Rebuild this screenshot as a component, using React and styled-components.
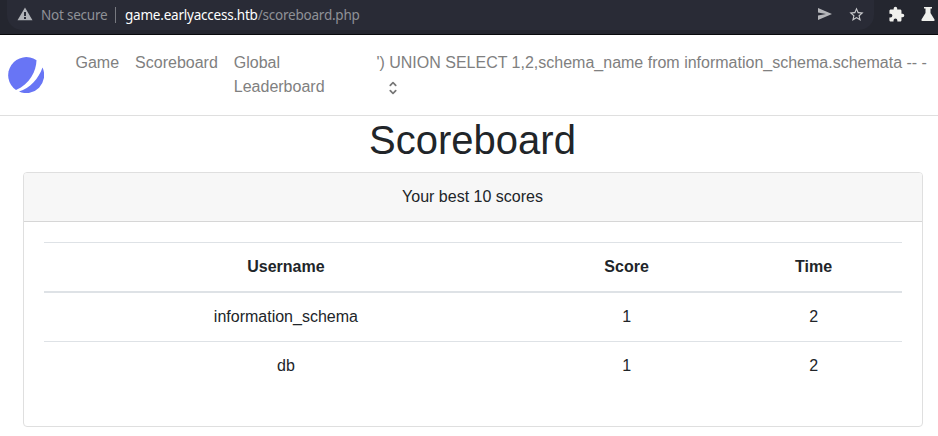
import React from 'react';
import styled, { createGlobalStyle } from 'styled-components';

const GlobalStyle = createGlobalStyle`
  *, *::before, *::after { box-sizing: border-box; }
  body {
    margin: 0;
    overflow: hidden;
    background: #fff;
    color: #212529;
    font: 16px/24px "Liberation Sans", Arial, sans-serif;
  }
  svg { display: block; flex: none; }
`;

const BrowserBar = styled.div`
  display: flex;
  align-items: flex-start;
  height: 35px;
  background: #24262f;
  border-bottom: 1px solid #08090c;
`;

const AddressField = styled.div`
  display: flex;
  align-items: center;
  width: 867px;
  height: 30px;
  margin-left: 7px;
  padding: 0 10px;
  border-radius: 0 0 15px 15px;
  background: #292b36;
  font: 13.5px/20px "Noto Sans", sans-serif;
  letter-spacing: -0.22px;
  color: #8f9197;
  white-space: nowrap;
`;

const SecurityLabel = styled.span`
  width: 72px;
  margin-left: 8px;
  padding-bottom: 1px;
`;

const Url = styled.span`
  flex: 1;
  margin: 0 0 1px 2px;
  padding-left: 9px;
  line-height: 16px;
  border-left: 1px solid #777980;
`;

const Host = styled.span`
  color: #fff;
`;

const FieldActions = styled.div`
  display: flex;
  gap: 15px;
  margin-right: -1px;
  padding-bottom: 2px;
`;

const Extensions = styled.div`
  display: flex;
  gap: 15px;
  padding: 6px 0 0 14px;
`;

const Navbar = styled.nav`
  display: flex;
  align-items: center;
  height: 81px;
  padding-left: 8px;
  border-bottom: 1px solid #dfdfdf;
  color: #808080;
`;

const Links = styled.div`
  display: flex;
  gap: 16px;
  height: 48px;
  margin-left: 31.5px;
`;

const NavLink = styled.a`
  width: ${({ $width }) => $width || 'auto'};
  color: inherit;
  text-decoration: none;
`;

const UserMenu = styled.div`
  height: 48px;
  margin-left: 36.6px;
  white-space: nowrap;

  svg { margin: 4px 0 0 7.4px; }
`;

const Title = styled.h1`
  margin: 0 0 8px 7px;
  font-size: 40px;
  font-weight: 500;
  line-height: 48px;
  text-align: center;
`;

const Card = styled.section`
  margin: 0 15px 0 23px;
  border: 1px solid #dfdfdf;
  border-radius: 4px;
  text-align: center;
`;

const CardHeader = styled.header`
  padding: 12px 21px 12px 20px;
  border-bottom: 1px solid #d6d6d6;
  border-radius: 3px 3px 0 0;
  background: #f7f7f7;
`;

const CardBody = styled.div`
  padding: 20px;
`;

const ScoreTable = styled.table`
  width: 100%;
  margin-bottom: 16px;
  table-layout: fixed;
  border-collapse: collapse;

  th, td {
    padding: 12px 12.8px 12px 12px;
    border-top: 1px solid #dee2e6;
  }
  th:first-child, td:first-child { padding-right: 12.2px; }
  thead th { border-bottom: 2px solid #dee2e6; }
`;

const Column = styled.col`
  width: ${({ $width }) => $width};
`;

const scores = [
  { name: 'information_schema', score: 1, time: 2 },
  { name: 'db', score: 1, time: 2 },
];

const WarningIcon = () => (
  <svg width="16" height="16" viewBox="0 0 16 16">
    <path fill="#b0b2b7" fillRule="evenodd" d="M8 .6 15.500 13.200H.5ZM7 5v4h2V5ZM7 10v2h2V10Z" />
  </svg>
);

const SendIcon = () => (
  <svg width="16" height="16" viewBox="0 0 16 16">
    <path fill="#b5b6ba" d="M1 2 15 8 1 14V9.4L9 8 1 6.6Z" />
  </svg>
);

const StarIcon = () => (
  <svg width="17" height="17" viewBox="0 0 24 24">
    <path fill="#c8c9cc" d="m22 9.24-7.19-.62L12 2 9.19 8.63 2 9.24l5.46 4.73L5.82 21 12 17.27 18.18 21l-1.63-7.03L22 9.24zM12 15.4l-3.76 2.27 1-4.28-3.32-2.88 4.38-.38L12 6.1l1.71 4.04 4.38.38-3.32 2.88 1 4.28L12 15.4z" />
  </svg>
);

const PuzzleIcon = () => (
  <svg width="17" height="17" viewBox="0 0 24 24">
    <path fill="#f0f0ed" d="M20.5 11H19V7c0-1.1-.9-2-2-2h-4V3.5a2.5 2.5 0 0 0-5 0V5H4c-1.1 0-1.99.9-1.99 2v3.8H3.5a2.7 2.7 0 0 1 0 5.4H2V20c0 1.1.9 2 2 2h3.8v-1.5a2.7 2.7 0 0 1 5.4 0V22H17c1.1 0 2-.9 2-2v-4h1.500a2.500 2.500 0 0 0 0-5z" />
  </svg>
);

const FlaskIcon = () => (
  <svg width="16" height="16" viewBox="0 0 16 16">
    <path fill="#f0f0ed" d="M4 1h8v1.500h-1.500V7L14.500 13.500Q15 15 13.500 15h-11Q1 15 1.500 13.500L5.500 7V2.500H4Z" />
  </svg>
);

const Logo = () => (
  <svg width="36" height="36" viewBox="0 0 36 36">
    <path fill="#6875f5" d="M8 33A18 18 0 1 1 28.500 3.300C28.300 14 22 27 8 33Z" />
    <path fill="#6875f5" d="M34.500 10.500A18 18 0 0 1 11 34.600C22 31 30.500 22 34.500 10.500Z" />
  </svg>
);

const SelectorIcon = () => (
  <svg width="18" height="18" viewBox="0 0 20 20">
    <path
      fill="#777"
      fillRule="evenodd"
      clipRule="evenodd"
      d="M10 3a1 1 0 01.707.293l3 3a1 1 0 01-1.414 1.414L10 5.414 7.707 7.707a1 1 0 01-1.414-1.414l3-3A1 1 0 0110 3zm-3.707 9.293a1 1 0 011.414 0L10 14.586l2.293-2.293a1 1 0 011.414 1.414l-3 3a1 1 0 01-1.414 0l-3-3a1 1 0 010-1.414z"
    />
  </svg>
);

export default function App() {
  return (
    <>
      <GlobalStyle />
      <BrowserBar>
        <AddressField>
          <WarningIcon />
          <SecurityLabel>Not secure</SecurityLabel>
          <Url><Host>game.earlyaccess.htb</Host>/scoreboard.php</Url>
          <FieldActions>
            <SendIcon />
            <StarIcon />
          </FieldActions>
        </AddressField>
        <Extensions>
          <PuzzleIcon />
          <FlaskIcon />
        </Extensions>
      </BrowserBar>
      <Navbar>
        <Logo />
        <Links>
          <NavLink>Game</NavLink>
          <NavLink>Scoreboard</NavLink>
          <NavLink $width="106px">Global Leaderboard</NavLink>
        </Links>
        <UserMenu>
          ') UNION SELECT 1,2,schema_name from information_schema.schemata -- -
          <SelectorIcon />
        </UserMenu>
      </Navbar>
      <main>
        <Title>Scoreboard</Title>
        <Card>
          <CardHeader>Your best 10 scores</CardHeader>
          <CardBody>
            <ScoreTable>
              <colgroup>
                <Column $width="484px" />
                <Column $width="198px" />
                <Column $width="176px" />
              </colgroup>
              <thead>
                <tr><th>Username</th><th>Score</th><th>Time</th></tr>
              </thead>
              <tbody>
                {scores.map(({ name, score, time }) => (
                  <tr key={name}><td>{name}</td><td>{score}</td><td>{time}</td></tr>
                ))}
              </tbody>
            </ScoreTable>
          </CardBody>
        </Card>
      </main>
    </>
  );
}
